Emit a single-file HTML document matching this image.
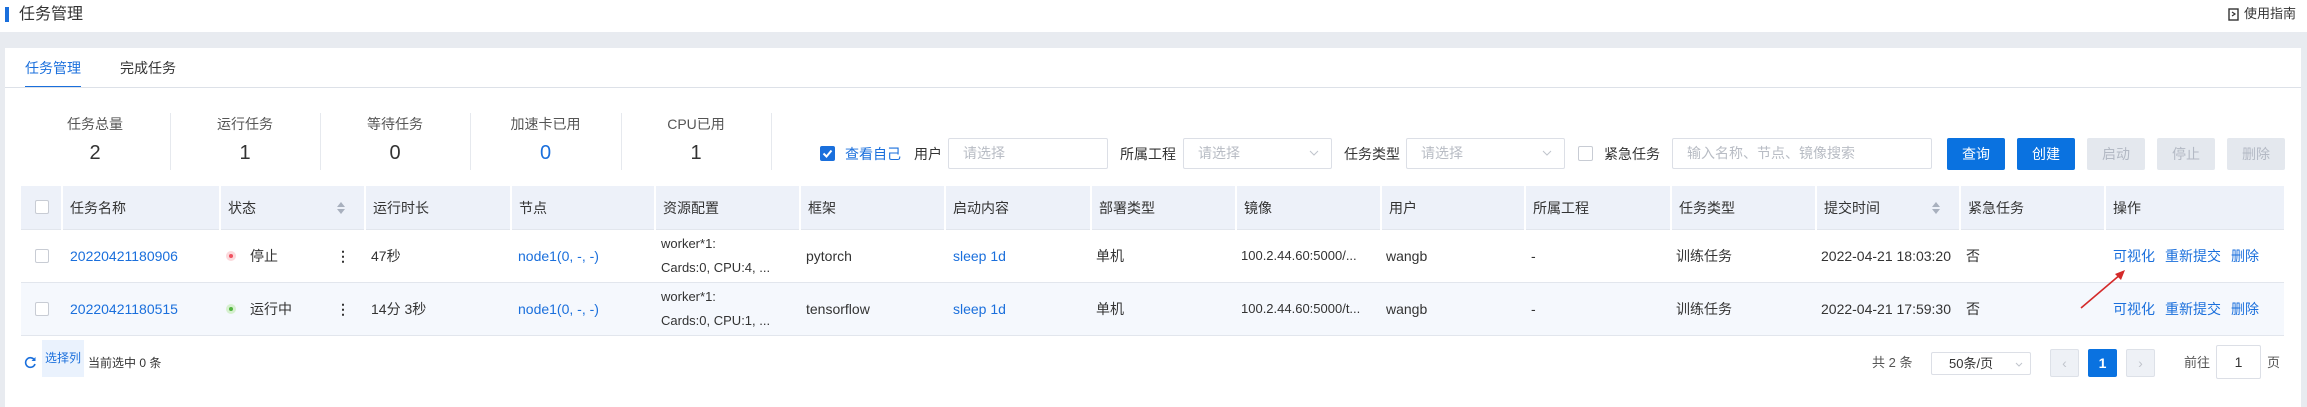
<!DOCTYPE html>
<html><head><meta charset="utf-8"><style>
*{margin:0;padding:0;box-sizing:border-box}
body{width:2307px;height:407px;background:#e8ebf0;font-family:"Liberation Sans","Noto Sans CJK SC",sans-serif;font-size:14px;color:#333;position:relative;overflow:hidden}
.a{position:absolute;white-space:nowrap}
.blue{color:#1a6fdc}
.hdr{background:#edf1f9;position:absolute;top:186px;height:44px}
.th{position:absolute;top:186px;height:44px;line-height:44px;padding-left:7px;border-left:2px solid #fff}
.td{position:absolute;line-height:20px}
.inp{position:absolute;border:1px solid #dcdfe6;background:#fff;border-radius:2px;color:#b8bcc4;padding-left:14px;line-height:29px}
.btn{position:absolute;top:138px;height:32px;width:58px;line-height:32px;text-align:center;border-radius:2px;font-size:14px}
.cb{position:absolute;width:14px;height:14px;border:1px solid #c8ccd4;border-radius:2px;background:#fff}
.sort{position:absolute;width:0;height:0;border-left:4px solid transparent;border-right:4px solid transparent}
</style></head><body>
<div class="a" style="left:0;top:0;width:2307px;height:32px;background:#fff"></div>
<div class="a" style="left:5px;top:7px;width:4px;height:15px;background:#1a6fdc"></div>
<div class="a" style="left:19px;top:4px;font-size:16px;line-height:22px;color:#333">任务管理</div>
<svg class="a" style="left:2228px;top:8px" width="12" height="13" viewBox="0 0 12 13"><rect x="1" y="1" width="9" height="11" fill="none" stroke="#333" stroke-width="1.4"/><path d="M4 4 L7 6 L4 8" fill="none" stroke="#333" stroke-width="1.2"/></svg>
<div class="a" style="left:2244px;top:5px;font-size:13px;line-height:18px">使用指南</div>

<div class="a" style="left:5px;top:48px;width:2296px;height:359px;background:#fff"></div>
<div class="a blue" style="left:25px;top:58px;line-height:20px">任务管理</div>
<div class="a" style="left:120px;top:58px;line-height:20px">完成任务</div>
<div class="a" style="left:25px;top:86px;width:56px;height:2px;background:#1a6fdc"></div>
<div class="a" style="left:5px;top:87px;width:2296px;height:1px;background:#dde1e8"></div>

<!-- stats -->
<div class="a" style="left:20px;top:115px;width:150px;text-align:center;color:#555;line-height:18px">任务总量</div>
<div class="a" style="left:20px;top:141px;width:150px;text-align:center;font-size:20px;line-height:24px">2</div>
<div class="a" style="left:170px;top:115px;width:150px;text-align:center;color:#555;line-height:18px">运行任务</div>
<div class="a" style="left:170px;top:141px;width:150px;text-align:center;font-size:20px;line-height:24px">1</div>
<div class="a" style="left:320px;top:115px;width:150px;text-align:center;color:#555;line-height:18px">等待任务</div>
<div class="a" style="left:320px;top:141px;width:150px;text-align:center;font-size:20px;line-height:24px">0</div>
<div class="a" style="left:470px;top:115px;width:151px;text-align:center;color:#555;line-height:18px">加速卡已用</div>
<div class="a blue" style="left:470px;top:141px;width:151px;text-align:center;font-size:20px;line-height:24px">0</div>
<div class="a" style="left:621px;top:115px;width:150px;text-align:center;color:#555;line-height:18px">CPU已用</div>
<div class="a" style="left:621px;top:141px;width:150px;text-align:center;font-size:20px;line-height:24px">1</div>
<div class="a" style="left:170px;top:113px;width:1px;height:57px;background:#e6e9ee"></div>
<div class="a" style="left:320px;top:113px;width:1px;height:57px;background:#e6e9ee"></div>
<div class="a" style="left:470px;top:113px;width:1px;height:57px;background:#e6e9ee"></div>
<div class="a" style="left:621px;top:113px;width:1px;height:57px;background:#e6e9ee"></div>
<div class="a" style="left:771px;top:113px;width:1px;height:57px;background:#e6e9ee"></div>

<!-- filters -->
<div class="a" style="left:820px;top:146px;width:15px;height:15px;background:#1a6fdc;border-radius:2px"></div>
<svg class="a" style="left:820px;top:146px" width="15" height="15"><path d="M3.5 7.5 L6.5 10.5 L11.5 4.5" fill="none" stroke="#fff" stroke-width="2"/></svg>
<div class="a blue" style="left:845px;top:144px;line-height:20px">查看自己</div>
<div class="a" style="left:914px;top:144px;line-height:20px">用户</div>
<div class="inp" style="left:948px;top:138px;width:160px;height:31px">请选择</div>
<div class="a" style="left:1120px;top:144px;line-height:20px">所属工程</div>
<div class="inp" style="left:1183px;top:138px;width:149px;height:31px">请选择</div>
<svg class="a" style="left:1309px;top:150px" width="10" height="7"><path d="M1 1 L5 5 L9 1" fill="none" stroke="#c0c4cc" stroke-width="1"/></svg>
<div class="a" style="left:1344px;top:144px;line-height:20px">任务类型</div>
<div class="inp" style="left:1406px;top:138px;width:159px;height:31px">请选择</div>
<div class="a" style="left:1565px;top:138px;width:1px;height:31px"></div>
<svg class="a" style="left:1542px;top:150px" width="10" height="7"><path d="M1 1 L5 5 L9 1" fill="none" stroke="#c0c4cc" stroke-width="1"/></svg>
<div class="cb" style="left:1578px;top:146px;width:15px;height:15px"></div>
<div class="a" style="left:1604px;top:144px;line-height:20px">紧急任务</div>
<div class="inp" style="left:1672px;top:138px;width:260px;height:31px">输入名称、节点、镜像搜索</div>
<div class="btn" style="left:1947px;background:#0a72e0;color:#fff">查询</div>
<div class="btn" style="left:2017px;background:#0a72e0;color:#fff">创建</div>
<div class="btn" style="left:2087px;background:#e4e8ee;color:#b3b9c4">启动</div>
<div class="btn" style="left:2157px;background:#e4e8ee;color:#b3b9c4">停止</div>
<div class="btn" style="left:2227px;background:#e4e8ee;color:#b3b9c4">删除</div>

<!-- table -->
<div class="hdr" style="left:21px;width:2263px"></div>
<div class="a" style="left:21px;top:282px;width:2263px;height:53px;background:#f5f8fd"></div>
<div class="a" style="left:21px;top:229px;width:2263px;height:1px;background:#e2e6ed"></div>
<div class="a" style="left:21px;top:282px;width:2263px;height:1px;background:#e2e6ed"></div>
<div class="a" style="left:21px;top:335px;width:2263px;height:1px;background:#e2e6ed"></div>
<div class="cb" style="left:35px;top:200px"></div>
<div class="cb" style="left:35px;top:249px"></div>
<div class="cb" style="left:35px;top:302px"></div>
<div class="th" style="left:61px">任务名称</div>
<div class="th" style="left:219px">状态</div>
<div class="sort" style="left:337px;top:202px;border-bottom:5px solid #a8b0be"></div>
<div class="sort" style="left:337px;top:209px;border-top:5px solid #a8b0be"></div>
<div class="th" style="left:364px">运行时长</div>
<div class="th" style="left:510px">节点</div>
<div class="th" style="left:654px">资源配置</div>
<div class="th" style="left:799px">框架</div>
<div class="th" style="left:944px">启动内容</div>
<div class="th" style="left:1090px">部署类型</div>
<div class="th" style="left:1235px">镜像</div>
<div class="th" style="left:1380px">用户</div>
<div class="th" style="left:1524px">所属工程</div>
<div class="th" style="left:1670px">任务类型</div>
<div class="th" style="left:1815px">提交时间</div>
<div class="sort" style="left:1932px;top:202px;border-bottom:5px solid #a8b0be"></div>
<div class="sort" style="left:1932px;top:209px;border-top:5px solid #a8b0be"></div>
<div class="th" style="left:1959px">紧急任务</div>
<div class="th" style="left:2104px">操作</div>

<!-- row1 -->
<div class="td blue" style="left:70px;top:246px">20220421180906</div>
<div class="a" style="left:226px;top:251px;width:10px;height:10px;border-radius:50%;background:#fbd9dc"></div>
<div class="a" style="left:229px;top:254px;width:4px;height:4px;border-radius:50%;background:#f0515f"></div>
<div class="td" style="left:250px;top:246px">停止</div>
<div class="td" style="left:336px;top:246px;font-weight:bold">⋮</div>
<div class="td" style="left:371px;top:246px">47秒</div>
<div class="td blue" style="left:518px;top:246px">node1(0, -, -)</div>
<div class="td" style="left:661px;top:234px;font-size:13px">worker*1:</div>
<div class="td" style="left:661px;top:258px;font-size:13px">Cards:0, CPU:4, ...</div>
<div class="td" style="left:806px;top:246px">pytorch</div>
<div class="td blue" style="left:953px;top:246px">sleep 1d</div>
<div class="td" style="left:1096px;top:246px">单机</div>
<div class="td" style="left:1241px;top:246px;font-size:13px">100.2.44.60:5000/...</div>
<div class="td" style="left:1386px;top:246px">wangb</div>
<div class="td" style="left:1531px;top:246px">-</div>
<div class="td" style="left:1676px;top:246px">训练任务</div>
<div class="td" style="left:1821px;top:246px">2022-04-21 18:03:20</div>
<div class="td" style="left:1966px;top:246px">否</div>
<div class="td blue" style="left:2113px;top:246px">可视化</div>
<div class="td blue" style="left:2165px;top:246px">重新提交</div>
<div class="td blue" style="left:2231px;top:246px">删除</div>
<!-- row2 -->
<div class="td blue" style="left:70px;top:299px">20220421180515</div>
<div class="a" style="left:226px;top:304px;width:10px;height:10px;border-radius:50%;background:#d6f0cf"></div>
<div class="a" style="left:229px;top:307px;width:4px;height:4px;border-radius:50%;background:#52b540"></div>
<div class="td" style="left:250px;top:299px">运行中</div>
<div class="td" style="left:336px;top:299px;font-weight:bold">⋮</div>
<div class="td" style="left:371px;top:299px">14分 3秒</div>
<div class="td blue" style="left:518px;top:299px">node1(0, -, -)</div>
<div class="td" style="left:661px;top:287px;font-size:13px">worker*1:</div>
<div class="td" style="left:661px;top:311px;font-size:13px">Cards:0, CPU:1, ...</div>
<div class="td" style="left:806px;top:299px">tensorflow</div>
<div class="td blue" style="left:953px;top:299px">sleep 1d</div>
<div class="td" style="left:1096px;top:299px">单机</div>
<div class="td" style="left:1241px;top:299px;font-size:13px">100.2.44.60:5000/t...</div>
<div class="td" style="left:1386px;top:299px">wangb</div>
<div class="td" style="left:1531px;top:299px">-</div>
<div class="td" style="left:1676px;top:299px">训练任务</div>
<div class="td" style="left:1821px;top:299px">2022-04-21 17:59:30</div>
<div class="td" style="left:1966px;top:299px">否</div>
<div class="td blue" style="left:2113px;top:299px">可视化</div>
<div class="td blue" style="left:2165px;top:299px">重新提交</div>
<div class="td blue" style="left:2231px;top:299px">删除</div>
<svg class="a" style="left:2075px;top:262px" width="60" height="50"><path d="M6 46 L46 12" stroke="#d42a2a" stroke-width="1.6"/><path d="M50 8 L40 12 L46 18 Z" fill="#d42a2a"/></svg>

<!-- footer -->
<svg class="a" style="left:24px;top:356px" width="13" height="13" viewBox="0 0 13 13"><path d="M10.5 4 A4.8 4.8 0 1 0 11 8" fill="none" stroke="#1a6fdc" stroke-width="1.6"/><path d="M11.5 1 L11.5 5 L7.5 5 Z" fill="#1a6fdc"/></svg>
<div class="a blue" style="left:42px;top:340px;width:42px;height:37px;background:#eaf2fd;font-size:12px;line-height:37px;text-align:center">选择列</div>
<div class="a" style="left:88px;top:354px;font-size:12px;line-height:18px">当前选中 0 条</div>
<div class="a" style="left:1872px;top:354px;font-size:13px;line-height:18px;color:#555">共 2 条</div>
<div class="a" style="left:1931px;top:352px;width:100px;height:23px;border:1px solid #dcdfe6;border-radius:2px;font-size:13px;line-height:21px;padding-left:17px">50条/页</div>
<svg class="a" style="left:2015px;top:362px" width="8" height="6"><path d="M1 1 L4 4 L7 1" fill="none" stroke="#c0c4cc"/></svg>
<div class="a" style="left:2050px;top:349px;width:29px;height:28px;background:#eef1f6;border:1px solid #dde1e8;border-radius:2px;color:#c0c4cc;text-align:center;line-height:26px">‹</div>
<div class="a" style="left:2088px;top:349px;width:29px;height:28px;background:#0a72e0;color:#fff;border-radius:2px;text-align:center;line-height:28px;font-weight:bold">1</div>
<div class="a" style="left:2126px;top:349px;width:29px;height:28px;background:#eef1f6;border:1px solid #dde1e8;border-radius:2px;color:#c0c4cc;text-align:center;line-height:26px">›</div>
<div class="a" style="left:2184px;top:354px;font-size:13px;line-height:18px;color:#555">前往</div>
<div class="a" style="left:2216px;top:345px;width:45px;height:34px;border:1px solid #dcdfe6;border-radius:2px;text-align:center;line-height:32px">1</div>
<div class="a" style="left:2267px;top:354px;font-size:13px;line-height:18px;color:#555">页</div>
</body></html>
